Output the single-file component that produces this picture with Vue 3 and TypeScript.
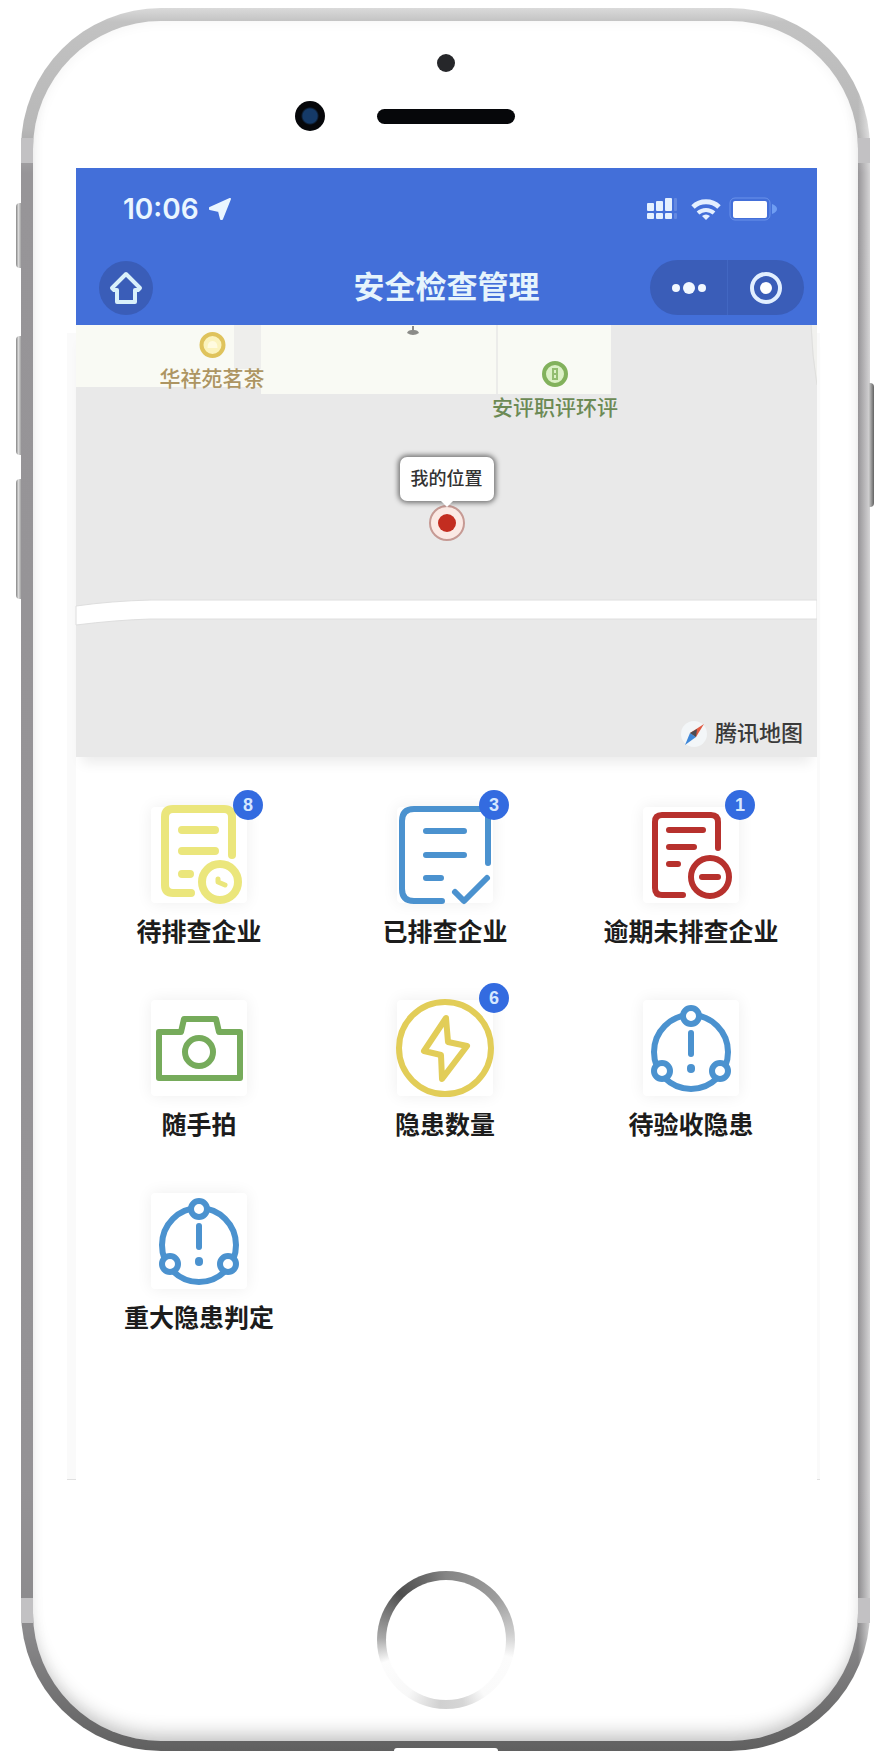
<script setup lang="ts">
type IconName = 'pending' | 'done' | 'overdue' | 'camera' | 'bolt' | 'alert'

interface Tile {
  label: string
  icon: IconName
  badge?: number
}

const tiles: Tile[] = [
  { label: '待排查企业', icon: 'pending', badge: 8 },
  { label: '已排查企业', icon: 'done', badge: 3 },
  { label: '逾期未排查企业', icon: 'overdue', badge: 1 },
  { label: '随手拍', icon: 'camera' },
  { label: '隐患数量', icon: 'bolt', badge: 6 },
  { label: '待验收隐患', icon: 'alert' },
  { label: '重大隐患判定', icon: 'alert' },
]
</script>

<template>
  <div class="stage">
    <div class="phone">
      <span class="side side-mute"></span>
      <span class="side side-up"></span>
      <span class="side side-down"></span>
      <span class="side side-power"></span>
      <span class="band band-tl"></span>
      <span class="band band-tr"></span>
      <span class="band band-bl"></span>
      <span class="band band-br"></span>
      <span class="port"></span>

      <div class="face">
        <div class="hardware">
          <span class="sensor"></span>
          <span class="lens"></span>
          <span class="speaker"></span>
        </div>

        <main class="screen">
          <header class="top">
            <div class="status">
              <span class="time">10:06</span>
              <svg class="locate" width="24" height="24" viewBox="0 0 24 24">
                <path d="M22 2 L2 11 V12 L11 14 L13 22 H14 Z" fill="#eaf6ff" stroke="#eaf6ff" stroke-width="2" stroke-linejoin="round" />
              </svg>
              <span class="spacer"></span>
              <svg width="30" height="22" viewBox="0 0 30 22" fill="#e4f0ff">
                <rect x="0" y="5" width="7" height="8" rx="1" />
                <rect x="9" y="3" width="7" height="10" rx="1" />
                <rect x="18" y="0" width="7" height="13" rx="1" />
                <rect x="0" y="15" width="7" height="6" rx="1" />
                <rect x="9" y="15" width="7" height="6" rx="1" />
                <rect x="18" y="15" width="7" height="6" rx="1" />
                <rect x="27" y="0" width="3" height="13" rx="1" opacity=".2" />
                <rect x="27" y="15" width="3" height="6" rx="1" opacity=".2" />
              </svg>
              <svg class="wifi" width="30" height="24" viewBox="0 0 30 24" fill="none" stroke="#e4f0ff" stroke-width="5">
                <path d="M2 10 A19 19 0 0 1 28 10" />
                <path d="M7 16 A12 12 0 0 1 23 16" stroke-width="4" />
                <path d="M11 19 A6 6 0 0 1 19 19 L15 23 Z" fill="#e4f0ff" stroke="none" />
              </svg>
              <svg width="50" height="24" viewBox="0 0 50 24">
                <rect x="1" y="1" width="40" height="22" rx="5" fill="none" stroke="#6a92ea" stroke-width="1" />
                <rect x="4" y="4" width="34" height="17" rx="2" fill="#fff" />
                <path d="M43 7 Q48 9 48 12 Q48 15 43 17 Z" fill="#6f9df2" />
              </svg>
            </div>
            <div class="nav">
              <button class="home-link" aria-label="首页">
                <svg width="34" height="34" viewBox="0 0 34 34" fill="none" stroke="#d9f0fa" stroke-width="4" stroke-linejoin="round">
                  <path d="M17 3 L31 17 L29 19 H26 V31 H8 V19 H5 L3 17 Z" />
                </svg>
              </button>
              <h1>安全检查管理</h1>
              <div class="capsule">
                <button aria-label="更多">
                  <svg width="36" height="16" viewBox="0 0 36 16" fill="#f2f8ff">
                    <circle cx="5" cy="8" r="4" />
                    <circle cx="18" cy="8" r="6" />
                    <circle cx="31" cy="8" r="4" />
                  </svg>
                </button>
                <button aria-label="关闭">
                  <svg width="34" height="34" viewBox="0 0 34 34">
                    <circle cx="17" cy="17" r="14" fill="none" stroke="#e2efff" stroke-width="4" />
                    <circle cx="17" cy="17" r="6" fill="#fff" />
                  </svg>
                </button>
              </div>
            </div>
          </header>

          <div class="body">
            <section class="map" aria-label="地图">
              <svg class="terrain" viewBox="0 0 741 432" preserveAspectRatio="none">
                <rect width="741" height="432" fill="#e9e9e9" />
                <path d="M0 0 H535 V69 H185 V62 H0 Z" fill="#f9faf4" />
                <rect x="158" y="0" width="27" height="44" fill="#eeeeec" />
                <path d="M421 0 V69" stroke="#ececea" stroke-width="2" />
                <path d="M736 0 Q737 30 741 58 V0 Z" fill="#f1f1ee" />
                <path d="M735 0 Q736 30 741 60" fill="none" stroke="#dfdfdd" stroke-width="1" />
                <path d="M0 281 Q35 276 75 275 H741 V294 H75 Q40 295 0 300 Z" fill="#fff" stroke="#dedede" stroke-width="1" />
                <path d="M331 8 Q332 5 336 5 V1 H338 V5 Q342 5 343 8 Q337 12 331 8 Z" fill="#8b8b88" />
              </svg>
              <div class="poi poi-tea">
                <svg width="28" height="28" viewBox="0 0 28 28">
                  <circle cx="14" cy="14" r="11" fill="#fbf3bd" stroke="#dfc35c" stroke-width="4" />
                  <path d="M9 17 Q9 10 14 10 Q19 10 19 17 Z" fill="#fffbe0" />
                </svg>
                <span>华祥苑茗茶</span>
              </div>
              <div class="poi poi-safety">
                <svg width="28" height="28" viewBox="0 0 28 28">
                  <circle cx="14" cy="14" r="11" fill="#dcf0c6" stroke="#82b15c" stroke-width="4" />
                  <path d="M12 9 H16 V19 H12 Z M12 14 H16" fill="none" stroke="#93bd71" stroke-width="2" />
                </svg>
                <span>安评职评环评</span>
              </div>
              <div class="me">
                <span class="callout">我的位置</span>
                <svg width="38" height="38" viewBox="0 0 38 38">
                  <circle cx="19" cy="19" r="17" fill="#fbe9e4" stroke="#c69a94" stroke-width="2" />
                  <circle cx="19" cy="19" r="9" fill="#c32d20" />
                </svg>
              </div>
              <div class="credit">
                <svg width="26" height="26" viewBox="0 0 26 26">
                  <circle cx="13" cy="13" r="13" fill="#f3f6f8" />
                  <path d="M23 3 L9 12 L15 16 Z" fill="#df5a42" />
                  <path d="M4 24 L9 12 L15 16 Z" fill="#3f87d8" />
                  <path d="M9 12 L16 8 L15 16 Z" fill="#4c4c54" />
                </svg>
                <span>腾讯地图</span>
              </div>
            </section>

            <section class="tiles">
              <button v-for="tile in tiles" :key="tile.label" class="tile">
                <span class="card">
                  <svg
                    width="96"
                    height="96"
                    viewBox="0 0 96 96"
                    fill="none"
                    stroke-linecap="round"
                    stroke-linejoin="round"
                    :class="tile.icon"
                  >
                    <template v-if="tile.icon === 'pending'">
                      <path d="M81 48 V10 Q81 2 73 2 H22 Q14 2 14 10 V78 Q14 86 22 86 H40" />
                      <path d="M31 23 H64 M31 44 H64 M31 67 H39" />
                      <circle cx="69" cy="75" r="18" />
                      <path d="M67 72 V75 L74 78" stroke-width="5" />
                    </template>
                    <template v-else-if="tile.icon === 'done'">
                      <path d="M91 56 V2 H17 Q5 2 5 14 V82 Q5 94 17 94 H45" />
                      <path d="M29 24 H67 M29 48 H67 M29 71 H44" />
                      <path d="M58 85 L67 94 L90 71" />
                    </template>
                    <template v-else-if="tile.icon === 'overdue'">
                      <path d="M75 41 V15 Q75 8 68 8 H19 Q12 8 12 15 V81 Q12 88 19 88 H40" />
                      <path d="M26 23 H60 M26 40 H51 M26 57 H35" />
                      <circle cx="67" cy="70" r="19" />
                      <path d="M59 70 H75" />
                    </template>
                    <template v-else-if="tile.icon === 'camera'">
                      <path d="M8 32 H30 L33 19 H65 L68 32 H89 V78 H8 Z" />
                      <circle cx="48" cy="52" r="14" />
                    </template>
                    <template v-else-if="tile.icon === 'bolt'">
                      <circle cx="48" cy="48" r="46" />
                      <path d="M49 18 L27 51 L44 55 L45 79 L70 46 L51 42 Z" />
                    </template>
                    <template v-else>
                      <circle cx="48" cy="52" r="37" />
                      <circle cx="48" cy="16" r="8" fill="#fff" />
                      <circle cx="19" cy="71" r="8" fill="#fff" />
                      <circle cx="77" cy="71" r="8" fill="#fff" />
                      <path d="M48 33 V54" />
                      <path d="M48 68 V69" stroke-width="8" />
                    </template>
                  </svg>
                  <span v-if="tile.badge" class="badge">{{ tile.badge }}</span>
                </span>
                <span class="label">{{ tile.label }}</span>
              </button>
            </section>
          </div>
        </main>

        <button class="home-key" aria-label="主屏幕"></button>
      </div>
    </div>
  </div>
</template>

<style>
body {
  background: #fff;
}
</style>

<style scoped>
.stage {
  box-sizing: border-box;
  padding: 8px 18px 8px 21px;
  font-family: 'Liberation Sans', 'Noto Sans CJK SC', sans-serif;
}
button {
  padding: 0;
  border: 0;
  background: none;
  color: inherit;
  font: inherit;
  cursor: pointer;
}
svg {
  display: block;
  flex: none;
  overflow: visible;
}

.phone {
  position: relative;
  padding: 13px 12px 10px;
  border-radius: 140px;
  background:
    linear-gradient(to left, rgba(255, 255, 255, 0.6), transparent 12px),
    linear-gradient(to bottom, #dadada 0, #c2c2c2 14px, #b8b8b8 120px, #979598 165px, #949295 85%, #8b8a8c 93%, #606060 100%);
}
.face {
  position: relative;
  display: flex;
  flex-direction: column;
  align-items: center;
  padding-bottom: 32px;
  border-radius: 128px;
  background: #fff;
  box-shadow:
    inset 0 -16px 18px -8px rgba(0, 0, 0, 0.2),
    inset 0 0 14px rgba(0, 0, 0, 0.05);
}

.side {
  position: absolute;
  left: -5px;
  width: 5px;
  border-radius: 4px 0 0 4px;
  background: linear-gradient(to right, #858585, #d9d9d9 50%, #a2a2a2);
}
.side-mute {
  top: 195px;
  height: 65px;
}
.side-up {
  top: 328px;
  height: 119px;
}
.side-down {
  top: 471px;
  height: 120px;
}
.side-power {
  left: auto;
  right: -4px;
  top: 375px;
  height: 124px;
  border-radius: 0 4px 4px 0;
  background: linear-gradient(to right, #c9c9c9, #626262);
}
.band {
  position: absolute;
  width: 12px;
  height: 25px;
  background: #c2c1c3;
}
.band-tl {
  left: 0;
  top: 130px;
}
.band-tr {
  right: 0;
  top: 130px;
}
.band-bl {
  left: 0;
  bottom: 128px;
}
.band-br {
  right: 0;
  bottom: 128px;
}
.port {
  position: absolute;
  left: 50%;
  bottom: 0;
  width: 104px;
  height: 3px;
  margin-left: -52px;
  border-radius: 8px 8px 0 0;
  background: #fff;
}

.hardware {
  display: grid;
  grid-template-columns: 1fr 138px 1fr;
  grid-template-rows: 18px 30px;
  row-gap: 29px;
  align-items: center;
  align-self: stretch;
  height: 114px;
  padding-top: 33px;
}
.sensor {
  grid-column: 2;
  justify-self: center;
  width: 18px;
  height: 18px;
  border-radius: 50%;
  background: #26272a;
}
.lens {
  grid-column: 1;
  justify-self: end;
  width: 30px;
  height: 30px;
  margin-right: 52px;
  border-radius: 50%;
  background: radial-gradient(circle, #153a68 0 7px, #06070a 9px);
}
.speaker {
  height: 15px;
  border-radius: 8px;
  background: #06070a;
}

.screen {
  align-self: stretch;
  margin: 0 41px 0 43px;
}
.top {
  height: 157px;
  background: #436fd9;
  color: #fff;
}
.status {
  display: flex;
  align-items: center;
  height: 82px;
  padding: 0 38px 0 47px;
}
.time {
  color: #eaf6ff;
  font: 600 28px/36px Inter, sans-serif;
}
.locate {
  margin-left: 9px;
}
.spacer {
  flex: 1;
}
.wifi {
  margin: 0 8px 0 14px;
}
.nav {
  display: grid;
  grid-template-columns: 1fr auto 1fr;
  align-items: center;
  height: 75px;
  padding: 0 13px;
}
.home-link {
  display: grid;
  place-items: center;
  width: 54px;
  height: 54px;
  margin-left: 10px;
  border-radius: 50%;
  background: #3a5db8;
}
.nav h1 {
  margin: 0;
  color: #e6f4fc;
  font-size: 31px;
  font-weight: 700;
  line-height: 40px;
}
.capsule {
  display: grid;
  grid-template-columns: 1fr 1fr;
  justify-self: end;
  width: 154px;
  height: 55px;
  border-radius: 28px;
  background: #3a5db8;
}
.capsule button {
  display: grid;
  place-items: center;
}
.capsule button + button {
  border-left: 1px solid #4267c2;
}

.body {
  position: relative;
}
.body::before,
.body::after {
  content: '';
  position: absolute;
  top: 8px;
  bottom: 0;
  border-bottom: 1px solid #e0e0e0;
  background: #fafafa;
}
.body::before {
  right: 100%;
  width: 9px;
}
.body::after {
  left: 100%;
  width: 3px;
}

.map {
  position: relative;
  height: 432px;
  box-shadow: 0 12px 12px -6px rgba(0, 0, 0, 0.08);
}
.terrain {
  width: 100%;
  height: 100%;
}
.poi {
  position: absolute;
  display: flex;
  flex-direction: column;
  align-items: center;
  gap: 6px;
  font-size: 21px;
  font-weight: 500;
  line-height: 28px;
  transform: translateX(-50%);
  white-space: nowrap;
}
.poi-tea {
  left: 136px;
  top: 6px;
  color: #ad9562;
}
.poi-safety {
  left: 479px;
  top: 35px;
  color: #6c8a55;
}
.me {
  position: absolute;
  left: 50%;
  top: 132px;
  display: flex;
  flex-direction: column;
  align-items: center;
  gap: 3px;
  transform: translateX(-50%);
}
.callout {
  position: relative;
  padding: 9px 11px;
  border-radius: 7px;
  background: #fff;
  box-shadow: 0 0 5px 2px rgba(0, 0, 0, 0.5);
  color: #333;
  font-size: 18px;
  font-weight: 500;
  line-height: 26px;
  white-space: nowrap;
}
.callout::after {
  content: '';
  position: absolute;
  left: 50%;
  top: 100%;
  margin-left: -6px;
  border: 6px solid transparent;
  border-top-color: #fff;
  border-bottom: 0;
}
.credit {
  position: absolute;
  right: 14px;
  bottom: 9px;
  display: flex;
  align-items: center;
  gap: 8px;
  color: #3a3a3a;
  font-size: 22px;
  font-weight: 500;
  line-height: 28px;
}

.tiles {
  display: grid;
  grid-template-columns: repeat(3, 1fr);
  row-gap: 49px;
  padding: 50px 3px 143px 0;
}
.tile {
  display: flex;
  flex-direction: column;
  align-items: center;
  gap: 11px;
  white-space: nowrap;
}
.card {
  position: relative;
  border-radius: 4px;
  background: #fff;
  box-shadow: 0 0 16px rgba(0, 0, 0, 0.07);
}
.label {
  color: #1c1c1c;
  font-size: 25px;
  font-weight: 700;
  line-height: 37px;
}
.badge {
  position: absolute;
  top: -17px;
  right: -16px;
  width: 30px;
  height: 30px;
  border-radius: 50%;
  background: #336be0;
  color: #d6e8ff;
  font-size: 18px;
  font-weight: 700;
  line-height: 30px;
  text-align: center;
}
.pending {
  stroke: #ebe67c;
  stroke-width: 8px;
}
.done {
  stroke: #4b92cf;
  stroke-width: 6px;
}
.overdue {
  stroke: #b7312d;
  stroke-width: 6px;
}
.camera {
  stroke: #76ab5b;
  stroke-width: 6px;
}
.bolt {
  stroke: #e2cd58;
  stroke-width: 6px;
}
.alert {
  stroke: #4b92cf;
  stroke-width: 6px;
}

.home-key {
  position: relative;
  width: 138px;
  height: 138px;
  margin-top: 91px;
  border-radius: 50%;
  background: conic-gradient(#858585 0deg, #9c9c9c 50deg, #cfcfcf 85deg, #fcfcfc 105deg, #fafafa 145deg, #d6d6d6 165deg, #d0d0d0 185deg, #f8f8f8 215deg, #fdfdfd 250deg, #a8a8a8 272deg, #4e4e4e 315deg, #6e6e6e 345deg, #858585 360deg);
}
.home-key::before {
  content: '';
  position: absolute;
  inset: 9px;
  border-radius: 50%;
  background: #fff;
}
</style>
